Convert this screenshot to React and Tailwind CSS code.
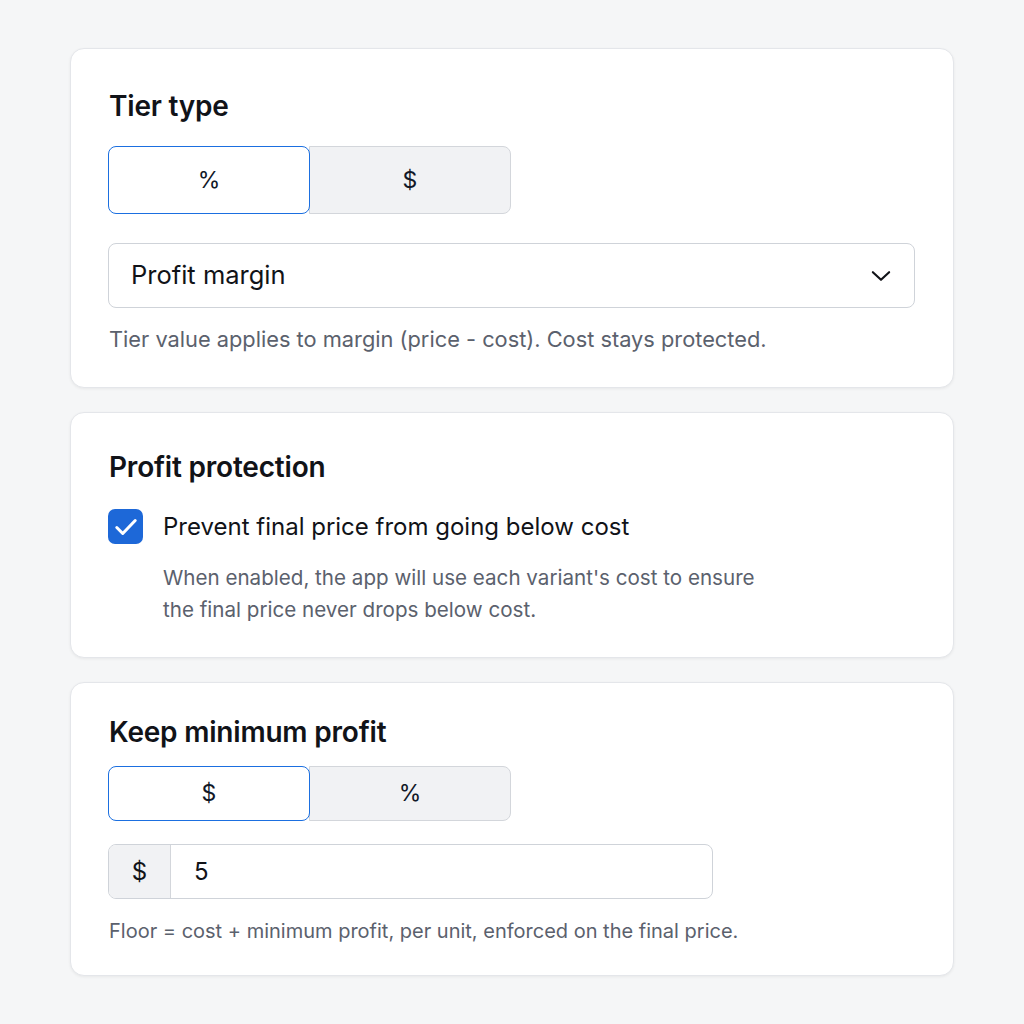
import React, { useState } from "react";

const font = { fontFamily: "Inter, 'Liberation Sans', sans-serif" };

function Segmented({ options, value, onChange, h }) {
  return (
    <div className={`flex w-[403px] -ml-px ${h}`}>
      {options.map((o, i) => {
        const active = o === value;
        return (
          <button
            key={o}
            onClick={() => onChange(o)}
            className={`flex-1 flex items-center justify-center text-[23px] text-[#111827] ${
              i === 0 ? "rounded-l-[8px]" : "rounded-r-[8px]"
            } ${
              active
                ? "bg-white border-[1.5px] border-[#1b6fe0] rounded-[8px] z-10"
                : "bg-[#f1f2f4] border border-[#d3d6db]"
            } ${i === 1 ? "-ml-px" : ""}`}
          >
            {o}
          </button>
        );
      })}
    </div>
  );
}

function Card({ children, className }) {
  return (
    <section
      className={`rounded-[14px] bg-white border border-[#e4e6ea] shadow-[0_1px_3px_rgba(0,0,0,0.06)] px-[38px] ${className}`}
    >
      {children}
    </section>
  );
}

export default function App() {
  const [tier, setTier] = useState("%");
  const [minType, setMinType] = useState("$");
  const [protect, setProtect] = useState(true);

  return (
    <div style={font} className="min-h-[1024px] bg-[#f5f6f7] px-[70px] pt-[48px] flex flex-col gap-[24px] w-[1024px]">
      {/* Tier type */}
      <Card className="pt-[41px] pb-[34px]">
        <h2 className="text-[28px] leading-[32px] font-semibold text-[#111318] tracking-[-0.2px]">Tier type</h2>
        <div className="mt-[24px]">
          <Segmented options={["%", "$"]} value={tier} onChange={setTier} h="h-[68px]" />
        </div>
        <div className="mt-[29px] -ml-px w-[807px] h-[65px] rounded-[8px] border border-[#cfd3d9] flex items-center justify-between pl-[22px] pr-[20px]">
          <span className="text-[25.5px] text-[#111318]">Profit margin</span>
          <svg width="26" height="26" viewBox="0 0 24 24" fill="none" stroke="#111318" strokeWidth="2" strokeLinecap="round" strokeLinejoin="round">
            <path d="M4.5 8.5l7.5 7 7.5-7" />
          </svg>
        </div>
        <p className="mt-[17px] text-[21.8px] leading-[28px] text-[#5b616d]">
          Tier value applies to margin (price - cost). Cost stays protected.
        </p>
      </Card>

      {/* Profit protection */}
      <Card className="pt-[38px] pb-[31px]">
        <h2 className="text-[28px] leading-[32px] font-semibold text-[#111318] tracking-[-0.2px]">Profit protection</h2>
        <label className="mt-[26px] flex items-center gap-[20px] cursor-pointer" onClick={() => setProtect(!protect)}>
          <span className={`-ml-px w-[35px] h-[35px] rounded-[7px] flex items-center justify-center ${protect ? "bg-[#1d68d8]" : "bg-white border border-[#cfd3d9]"}`}>
            {protect && (
              <svg width="26" height="26" viewBox="0 0 24 24" fill="none" stroke="white" strokeWidth="2.8" strokeLinecap="round" strokeLinejoin="round">
                <path d="M3.5 12.5l5.5 5.5L20.5 6" />
              </svg>
            )}
          </span>
          <span className="text-[24px] leading-[32px] text-[#111318]">Prevent final price from going below cost</span>
        </label>
        <p className="mt-[18px] ml-[54px] w-[600px] text-[20.6px] leading-[32px] text-[#5b616d]">
          When enabled, the app will use each variant's cost to ensure the final price never drops below cost.
        </p>
      </Card>

      {/* Keep minimum profit */}
      <Card className="pt-[33px] pb-[30px]">
        <h2 className="text-[28px] leading-[32px] font-semibold text-[#111318] tracking-[-0.2px]">Keep minimum profit</h2>
        <div className="mt-[18px]">
          <Segmented options={["$", "%"]} value={minType} onChange={setMinType} h="h-[55px]" />
        </div>
        <div className="mt-[23px] -ml-px w-[605px] h-[55px] rounded-[8px] border border-[#cfd3d9] flex overflow-hidden">
          <span className="w-[62px] bg-[#f1f2f4] border-r border-[#d3d6db] flex items-center justify-center text-[24px] text-[#111318]">$</span>
          <span className="flex items-center pl-[23px] text-[24px] text-[#111318]">5</span>
        </div>
        <p className="mt-[18px] text-[20px] leading-[28px] text-[#5b616d]">
          Floor = cost + minimum profit, per unit, enforced on the final price.
        </p>
      </Card>
    </div>
  );
}
